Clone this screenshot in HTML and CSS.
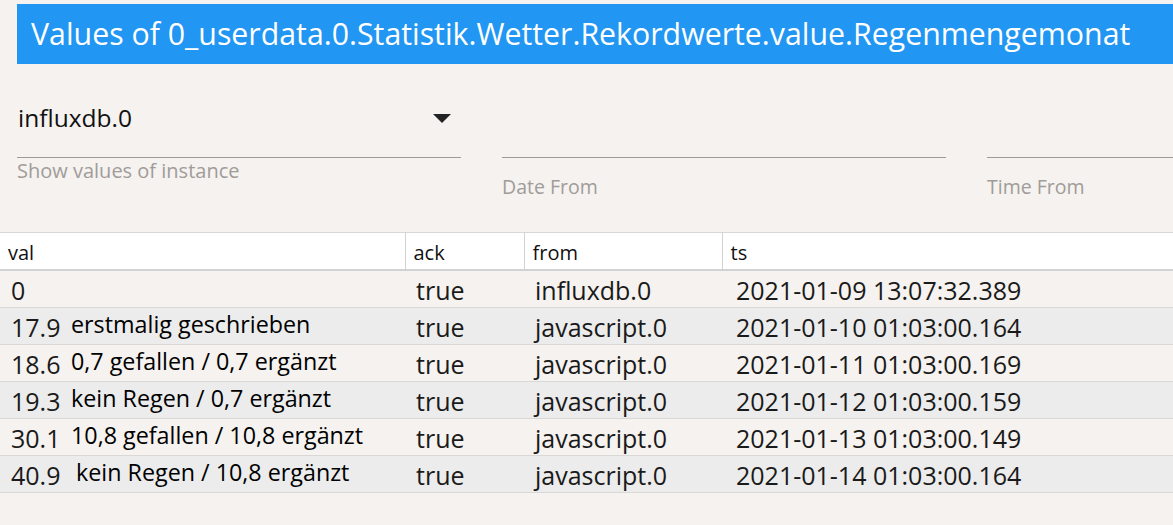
FILE: index.html
```html
<!DOCTYPE html>
<html>
<head>
<meta charset="utf-8">
<link rel="stylesheet" href="styles.css">
</head>
<body>
<div class="page">
  <div class="title">Values of 0_userdata.0.Statistik.Wetter.Rekordwerte.value.Regenmengemonat</div>
  <div class="filters">
    <div class="field">
      <div class="select">
        <span class="select-value">influxdb.0</span>
        <svg class="arrow" width="18" height="9" viewBox="0 0 18 9"><path d="M0 0H18L9 9Z" fill="#222"/></svg>
      </div>
      <div class="helper">Show values of instance</div>
    </div>
    <div class="field">
      <div class="input"></div>
      <div class="label">Date From</div>
    </div>
    <div class="field">
      <div class="input"></div>
      <div class="label">Time From</div>
    </div>
  </div>
  <table class="grid">
    <colgroup>
      <col class="w-val">
      <col class="w-ack">
      <col class="w-from">
      <col>
    </colgroup>
    <thead>
      <tr>
        <th>val</th>
        <th>ack</th>
        <th>from</th>
        <th>ts</th>
      </tr>
    </thead>
    <tbody>
      <tr>
        <td><span class="num">0</span></td>
        <td>true</td>
        <td>influxdb.0</td>
        <td class="c-ts">2021-01-09 13:07:32.389</td>
      </tr>
      <tr class="alt">
        <td><span class="num">17.9</span><span class="note">erstmalig geschrieben</span></td>
        <td>true</td>
        <td>javascript.0</td>
        <td class="c-ts">2021-01-10 01:03:00.164</td>
      </tr>
      <tr>
        <td><span class="num">18.6</span><span class="note">0,7 gefallen / 0,7 ergänzt</span></td>
        <td>true</td>
        <td>javascript.0</td>
        <td class="c-ts">2021-01-11 01:03:00.169</td>
      </tr>
      <tr class="alt">
        <td><span class="num">19.3</span><span class="note">kein Regen / 0,7 ergänzt</span></td>
        <td>true</td>
        <td>javascript.0</td>
        <td class="c-ts">2021-01-12 01:03:00.159</td>
      </tr>
      <tr>
        <td><span class="num">30.1</span><span class="note">10,8 gefallen / 10,8 ergänzt</span></td>
        <td>true</td>
        <td>javascript.0</td>
        <td class="c-ts">2021-01-13 01:03:00.149</td>
      </tr>
      <tr class="alt">
        <td><span class="num">40.9</span><span class="note note-wide">kein Regen / 10,8 ergänzt</span></td>
        <td>true</td>
        <td>javascript.0</td>
        <td class="c-ts">2021-01-14 01:03:00.164</td>
      </tr>
    </tbody>
  </table>
</div>
</body>
</html>
```

FILE: styles.css
```css
html, body {
  margin: 0;
  padding: 0;
  background: #f5f2ef;
}
body {
  width: 1173px;
  height: 525px;
  overflow: hidden;
  font-family: "Open Sans", "Noto Sans", sans-serif;
  color: #111;
}
.page {
  padding-top: 4px;
}
.title {
  margin-left: 17px;
  height: 60px;
  background: #2196f3;
  color: #fff;
  font-size: 30.3px;
  line-height: 60px;
  padding-left: 14px;
  white-space: nowrap;
  overflow: hidden;
}
.filters {
  display: flex;
  gap: 41px;
  padding-left: 17px;
  height: 168px;
  overflow: hidden;
  white-space: nowrap;
}
.field {
  flex: 0 0 444px;
  display: flex;
  flex-direction: column;
}
.select {
  margin-top: 38px;
  height: 56px;
  border-bottom: 1.5px solid #9e9a98;
  display: flex;
  align-items: flex-start;
  justify-content: space-between;
  box-sizing: border-box;
}
.select-value {
  font-size: 24.5px;
  line-height: 32px;
  padding-left: 1px;
  color: #111;
}
.arrow {
  margin-top: 12px;
  margin-right: 10px;
}
.helper {
  font-size: 20px;
  color: #a09c9a;
  margin-top: 0px;
  line-height: 26px;
}
.input {
  margin-top: 93px;
  height: 0;
  border-bottom: 1.5px solid #9e9a98;
}
.label {
  font-size: 19.5px;
  color: #a09c9a;
  margin-top: 16px;
  line-height: 26px;
}
.grid {
  width: 1173px;
  border-collapse: collapse;
  table-layout: fixed;
  border-top: 1px solid #d9d6d4;
}
.w-val { width: 405px; }
.w-ack { width: 119px; }
.w-from { width: 198px; }
.grid th {
  background: #fff;
  font-weight: normal;
  font-size: 20px;
  text-align: left;
  height: 34px;
  padding: 2px 0 0 8px;
  border-left: 1px solid #d2d2d2;
  border-bottom: 2px solid #d2d2d2;
  color: #111;
}
.grid th:first-child {
  border-left: none;
}
.grid td {
  font-size: 25px;
  height: 34px;
  padding: 2px 0 0 11px;
  border-bottom: 1px solid #dad8d6;
  white-space: nowrap;
  overflow: hidden;
  color: #1a1a1a;
}
.grid td.c-ts {
  padding-left: 14px;
}
.grid tr.alt td {
  background: #ececec;
}
.num {
  display: inline-block;
  min-width: 60px;
}
.note {
  font-size: 23.3px;
  font-weight: 500;
  color: #000;
  position: relative;
  top: -4px;
}
.note-wide {
  padding-left: 5px;
}
```
